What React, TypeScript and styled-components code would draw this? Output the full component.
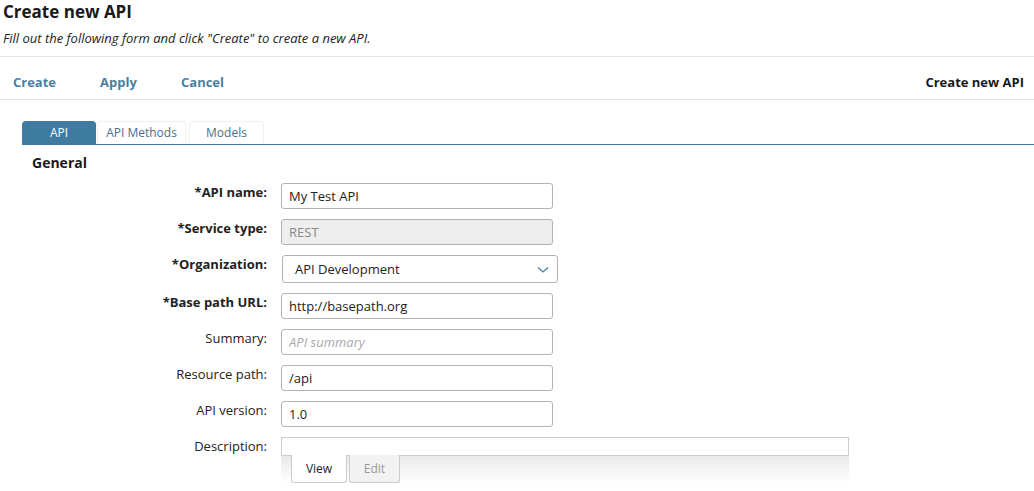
import React from "react";
import styled, { createGlobalStyle } from "styled-components";

const Global = createGlobalStyle`
  html, body { margin: 0; padding: 0; background: #fff; }
  body { font-family: "Open Sans", "Liberation Sans", sans-serif; color: #222; }
  * { box-sizing: border-box; }
`;

const Page = styled.div`
  width: 1034px;
  height: 491px;
  overflow: hidden;
`;

const Header = styled.div`
  padding: 0 3px;
  height: 57px;
  border-bottom: 1px solid #e6e6e6;
`;

const Title = styled.h1`
  margin: 0;
  font-size: 17px;
  line-height: 24px;
  font-weight: 700;
  color: #1a1a1a;
`;

const Subtitle = styled.p`
  margin: 5px 0 0;
  font-size: 13px;
  line-height: 18px;
  font-style: italic;
  color: #222;
`;

const Toolbar = styled.div`
  display: flex;
  align-items: center;
  height: 43px;
  padding: 8px 10px 0 13px;
  border-bottom: 1px solid #e6e6e6;
`;

const ToolLink = styled.a<{ $w: number }>`
  width: ${(p) => p.$w}px;
  font-size: 13px;
  font-weight: 700;
  color: #4a7fa3;
  text-decoration: none;
  cursor: pointer;
`;

const ToolTitle = styled.div`
  margin-left: auto;
  font-size: 13px;
  font-weight: 700;
  color: #1a1a1a;
`;

const Body = styled.div`
  padding: 21px 0 0 22px;
`;

const TabStrip = styled.div`
  display: flex;
  align-items: flex-end;
  height: 24px;
  border-bottom: 1px solid #3f7ba1;
`;

const Tab = styled.div<{ $active?: boolean; $w: number; $ml?: number }>`
  width: ${(p) => p.$w}px;
  margin-left: ${(p) => p.$ml ?? 0}px;
  height: 23px;
  padding-bottom: 2px;
  display: flex;
  align-items: center;
  justify-content: center;
  font-size: 12px;
  border-radius: 4px 4px 0 0;
  background: ${(p) => (p.$active ? "#3f7ba1" : "#fff")};
  color: ${(p) => (p.$active ? "#fff" : "#4d6f8a")};
  border: 1px solid ${(p) => (p.$active ? "#3f7ba1" : "#f1f1f1")};
  border-bottom: none;
`;

const Section = styled.h2`
  margin: 9px 0 0 10px;
  font-size: 14px;
  line-height: 18px;
  font-weight: 700;
  color: #1a1a1a;
`;

const Form = styled.div`
  display: grid;
  grid-template-columns: 245px auto;
  column-gap: 14px;
  row-gap: 10px;
  margin-top: 11px;
  align-items: start;
`;

const Label = styled.label<{ $req?: boolean }>`
  text-align: right;
  font-size: 13px;
  line-height: 18px;
  font-weight: ${(p) => (p.$req ? 700 : 400)};
  color: #222;
`;

const Input = styled.input<{ $w?: number }>`
  width: ${(p) => p.$w ?? 272}px;
  height: 26px;
  border: 1px solid #b3b3b3;
  border-radius: 3px;
  padding: 0 7px;
  font-family: "Open Sans", "Liberation Sans", sans-serif;
  font-size: 13px;
  color: #222;
  background: #fff;
  outline: none;
  &::placeholder { color: #a8a8a8; font-style: italic; }
  &:disabled { background: #eeeeee; color: #888; }
`;

const SelectBox = styled.div`
  position: relative;
  width: 276px;
  height: 28px;
  margin-left: 1px;
  border: 1px solid #b3b3b3;
  border-radius: 3px;
  display: flex;
  align-items: center;
  padding-left: 12px;
  font-size: 13px;
  color: #222;
`;

const Chevron = styled.svg`
  position: absolute;
  right: 8px;
  top: 10px;
`;

const DescWrap = styled.div`
  width: 568px;
`;

const DescBox = styled.div`
  height: 18px;
  border: 1px solid #cccccc;
  border-bottom: none;
`;

const DescTabs = styled.div`
  display: flex;
  gap: 2px;
  padding-left: 10px;
  height: 28px;
  background: linear-gradient(to bottom, #e9e9e9 0%, #ffffff 100%);
  border-top: 1px solid #cccccc;
`;

const DescTab = styled.div<{ $active?: boolean; $w: number }>`
  width: ${(p) => p.$w}px;
  height: 28px;
  margin-top: -1px;
  display: flex;
  align-items: center;
  justify-content: center;
  font-size: 12px;
  border: 1px solid #cccccc;
  border-top: none;
  border-radius: 0 0 3px 3px;
  background: ${(p) => (p.$active ? "#fff" : "#f2f2f2")};
  color: ${(p) => (p.$active ? "#222" : "#999")};
`;

export default function App() {
  return (
    <Page>
      <Global />
      <Header>
        <Title>Create new API</Title>
        <Subtitle>Fill out the following form and click "Create" to create a new API.</Subtitle>
      </Header>
      <Toolbar>
        <ToolLink $w={87}>Create</ToolLink>
        <ToolLink $w={81}>Apply</ToolLink>
        <ToolLink $w={60}>Cancel</ToolLink>
        <ToolTitle>Create new API</ToolTitle>
      </Toolbar>
      <Body>
        <TabStrip>
          <Tab $active $w={74}>API</Tab>
          <Tab $w={89} $ml={1}>API Methods</Tab>
          <Tab $w={75} $ml={3}>Models</Tab>
        </TabStrip>
        <Section>General</Section>
        <Form>
          <Label $req>*API name:</Label>
          <Input defaultValue="My Test API" />
          <Label $req>*Service type:</Label>
          <Input defaultValue="REST" disabled />
          <Label $req>*Organization:</Label>
          <SelectBox>
            API Development
            <Chevron width="12" height="8" viewBox="0 0 12 8">
              <path d="M1 1.5 L6 6 L11 1.5" fill="none" stroke="#4a7fa3" strokeWidth="1.3" />
            </Chevron>
          </SelectBox>
          <Label $req>*Base path URL:</Label>
          <Input defaultValue="http://basepath.org" />
          <Label>Summary:</Label>
          <Input placeholder="API summary" />
          <Label>Resource path:</Label>
          <Input defaultValue="/api" />
          <Label>API version:</Label>
          <Input defaultValue="1.0" />
          <Label>Description:</Label>
          <DescWrap>
            <DescBox />
            <DescTabs>
              <DescTab $active $w={56}>View</DescTab>
              <DescTab $w={51}>Edit</DescTab>
            </DescTabs>
          </DescWrap>
        </Form>
      </Body>
    </Page>
  );
}
